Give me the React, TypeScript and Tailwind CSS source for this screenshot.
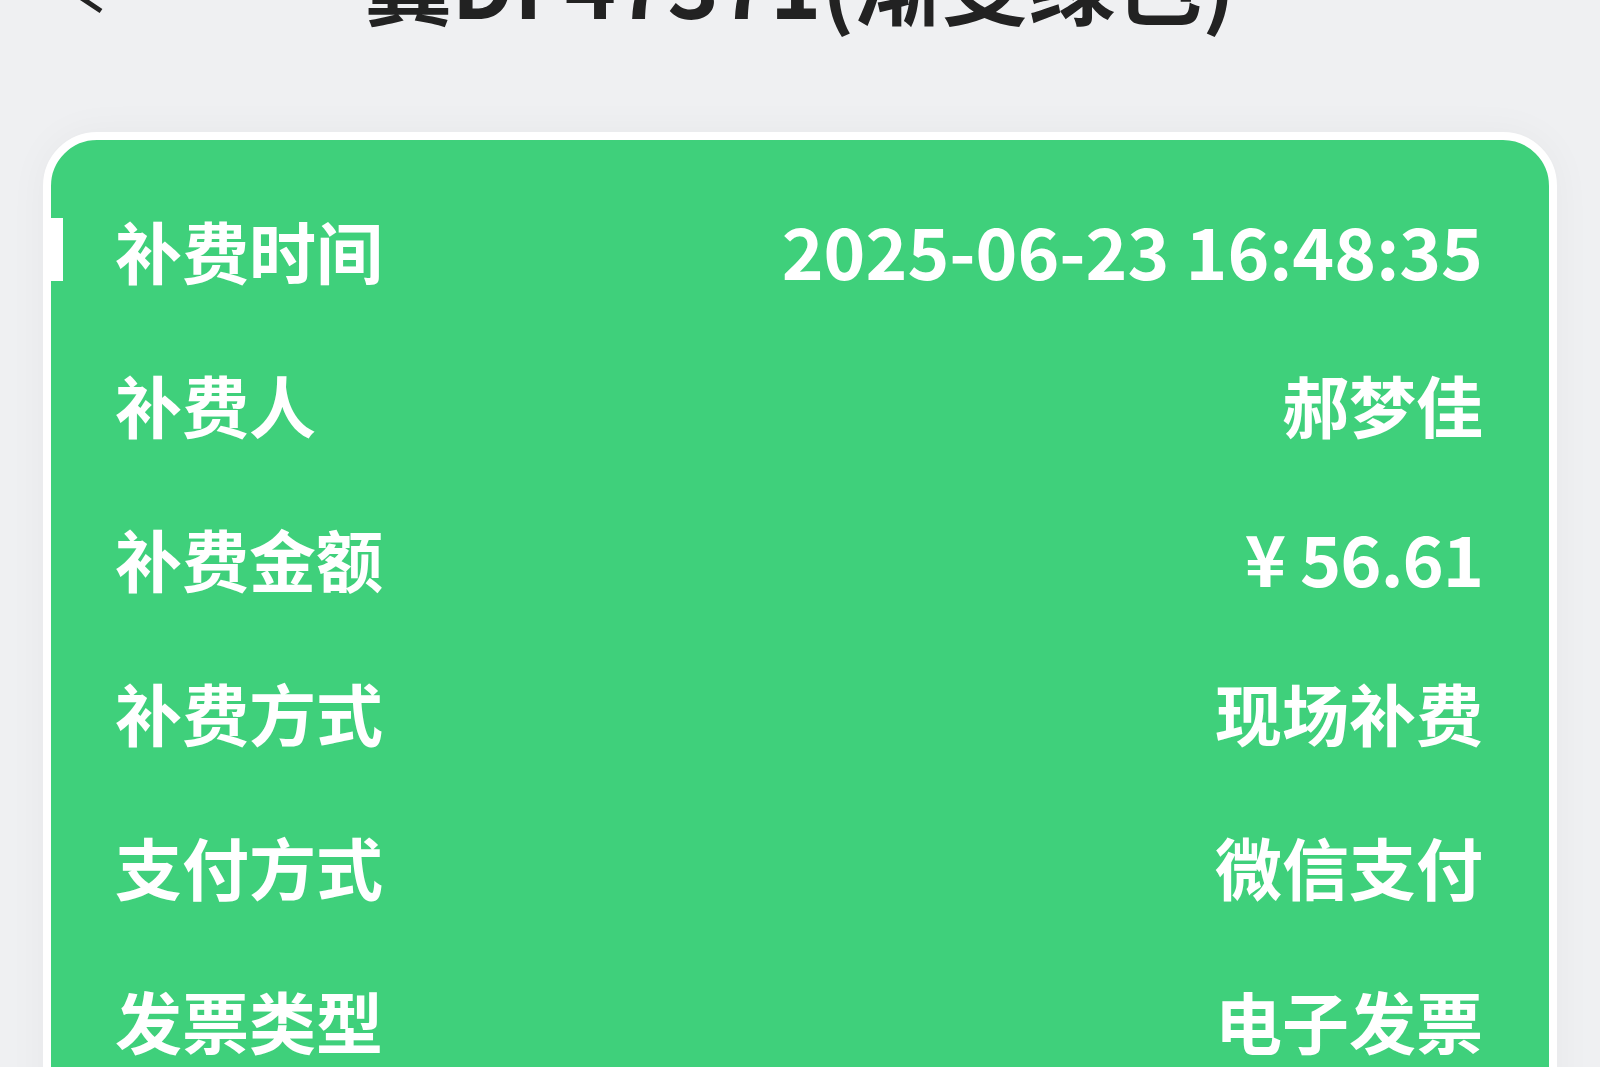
import React from "react";

const rows: { label: string; value: string }[] = [
  { label: "补费时间", value: "2025-06-23 16:48:35" },
  { label: "补费人", value: "郝梦佳" },
  { label: "补费金额", value: "¥ 56.61" },
  { label: "补费方式", value: "现场补费" },
  { label: "支付方式", value: "微信支付" },
  { label: "发票类型", value: "电子发票" },
  { label: "发票状态", value: "已开具" },
];

const font = { fontFamily: '"Noto Sans CJK SC", "Noto Sans", sans-serif' };

export default function App() {
  return (
    <div className="w-[1600px] h-[1067px] overflow-hidden bg-[#eff0f2]" style={font}>
      {/* Header */}
      <div className="relative flex h-[132px] flex-col">
        <svg
          className="absolute left-[70px] top-[-30px]"
          width="40"
          height="50"
          viewBox="0 0 40 50"
          fill="none"
        >
          <path d="M31 13 L10 27 L31 41" stroke="#222" strokeWidth="5" />
        </svg>
        <h1 className="mt-[-62px] text-center text-[87px] font-bold leading-none text-[#222]">
          冀DF47371(渐变绿色)
        </h1>
      </div>

      {/* Card */}
      <div className="mx-[43px] rounded-[54px] border-[8px] border-white bg-[#3fd07b] shadow-[0_0_40px_rgba(0,0,0,0.04)] pt-[32px] pb-10">
        {rows.map((row, i) => (
          <div key={row.label} className="relative flex h-[154px] items-center justify-between pl-[64px] pr-[66px] text-white">
            {i === 0 && <span className="absolute left-0 top-[46px] h-[63px] w-[12px] bg-white" />}
            <span className="text-[67px] font-bold leading-none">{row.label}</span>
            <span
              className={
                i === 0
                  ? "text-[71px] font-bold leading-none"
                  : i === 2
                    ? "text-[70px] font-bold leading-none tracking-[-1px]"
                    : "text-[67px] font-bold leading-none"
              }
            >
              {row.value}
            </span>
          </div>
        ))}
      </div>
    </div>
  );
}
